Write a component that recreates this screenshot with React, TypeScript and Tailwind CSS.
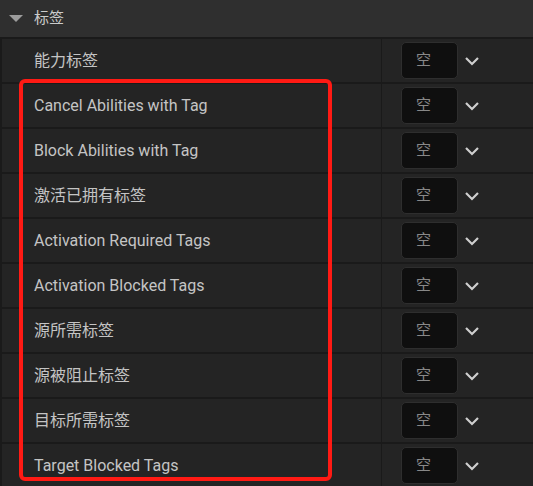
import React from "react";

const rows = [
  "能力标签",
  "Cancel Abilities with Tag",
  "Block Abilities with Tag",
  "激活已拥有标签",
  "Activation Required Tags",
  "Activation Blocked Tags",
  "源所需标签",
  "源被阻止标签",
  "目标所需标签",
  "Target Blocked Tags",
];

const Chevron = () => (
  <svg width="16" height="10" viewBox="0 0 16 10" className="ml-[6px]">
    <path d="M2 2 L8 8 L14 2" fill="none" stroke="#cfcfcf" strokeWidth="2.2" />
  </svg>
);

const App: React.FC = () => {
  return (
    <div
      className="relative w-[533px] h-[486px] overflow-hidden bg-[#1a1a1a]"
      style={{ fontFamily: "Roboto, 'Noto Sans CJK SC', sans-serif" }}
    >
      {/* category header */}
      <div className="flex items-center h-[37px] bg-[#2f2f2f] pl-[9px]">
        <svg width="14" height="8" viewBox="0 0 14 8">
          <path d="M0 0 L14 0 L7 7 Z" fill="#9c9c9c" />
        </svg>
        <span className="ml-[11px] text-[15px] text-[#cbcbcb]">标签</span>
      </div>

      <div className="flex flex-col gap-[2px] pt-[2px] pl-[2px]">
        {rows.map((label) => (
          <div key={label} className="flex h-[43px] bg-[#242424]">
            <div className="flex items-center w-[379px] pl-[32px] text-[16px] text-[#c4c4c4]">
              {label}
            </div>
            <div className="w-px bg-[#1a1a1a]" />
            <div className="flex items-center pl-[19px]">
              <div className="flex items-center w-[57px] h-[37px] pl-[14px] rounded-[5px] bg-[#0f0f0f] border border-[#2e2e2e] text-[15px] text-[#888888]">
                空
              </div>
              <Chevron />
            </div>
          </div>
        ))}
      </div>

      {/* annotation */}
      <div className="absolute left-[19px] top-[79px] w-[313px] h-[402px] border-[4px] border-[#ff1a14] rounded-[6px]" />
    </div>
  );
};

export default App;
